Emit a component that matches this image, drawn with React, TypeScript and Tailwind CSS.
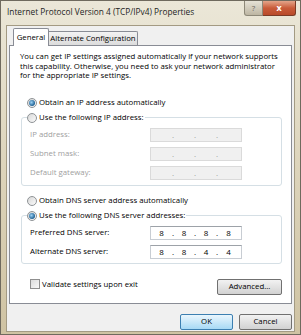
const ui = "font-['Open_Sans','Noto_Sans',sans-serif]";

function Radio({ checked }: { checked?: boolean }) {
  return (
    <span className="w-[10px] h-[10px] rounded-full border border-[#8f9396] bg-linear-to-br from-[#d8d8d8] to-[#fbfbfb] flex items-center justify-center shrink-0">
      {checked && <span className="w-[6px] h-[6px] rounded-full bg-[radial-gradient(circle_at_40%_40%,#9fd3f5,#1c5f92_70%)]" />}
    </span>
  );
}

function IpBox({ values, disabled }: { values: string[]; disabled?: boolean }) {
  const seg = ["w-[21px]", "w-[20px]", "w-[20px]", "w-[21px]"];
  return (
    <div
      className={
        "w-[92px] h-[14px] border flex items-center text-[8px] " +
        (disabled ? "bg-[#f0f0f0] border-[#dadada] text-[#9a9a9a]" : "bg-white border-[#c8cdd3] border-t-[#9da2a8] text-black")
      }
    >
      {values.map((v, i) => (
        <div key={i} className="flex items-center">
          <span className={seg[i] + " text-center"}>{v}</span>
          {i < 3 && <span className="w-[2px] text-center">.</span>}
        </div>
      ))}
    </div>
  );
}

function Row({ label, values, disabled }: { label: string; values: string[]; disabled?: boolean }) {
  return (
    <div className="flex items-center h-[14px]">
      <span className={"w-[128px] pl-[8px] " + (disabled ? "text-[#a0a0a0]" : "text-black")}>{label}</span>
      <IpBox values={values} disabled={disabled} />
    </div>
  );
}

function Button({ children, primary, w }: { children: string; primary?: boolean; w: string }) {
  return (
    <button
      className={
        w +
        " h-[16px] rounded-[2px] border text-[7.8px] leading-none flex items-center justify-center " +
        (primary
          ? "border-[#3c7fb1] bg-linear-to-b from-[#eaf6fd] to-[#a7d9f5]"
          : "border-[#707070] bg-linear-to-b from-[#f2f2f2] to-[#d2d2d2]")
      }
    >
      {children}
    </button>
  );
}

export default function App() {
  return (
    <div className={ui + " w-[301px] h-[335px] bg-linear-to-b from-[#ebe7d8] via-[#ddd4bb] to-[#cfc3a3] border border-[#6f6a5e] flex flex-col text-[7.8px] text-black"}>
      {/* title bar */}
      <div className="h-[24px] flex items-start shrink-0">
        <span className="pl-[6px] pt-[5px] text-[8.3px] text-[#1e1e1e] whitespace-nowrap">Internet Protocol Version 4 (TCP/IPv4) Properties</span>
        <div className="ml-auto mr-[4px] flex">
          <div className="w-[19px] h-[15px] rounded-bl-[3px] border border-t-0 border-[#8d8878] bg-linear-to-b from-[#e6e2d6] to-[#bdb6a3] flex items-center justify-center text-[8px] text-[#6a665a]">?</div>
          <div className="w-[33px] h-[15px] rounded-br-[3px] border border-t-0 border-l-0 border-[#7a3b26] bg-linear-to-b from-[#e3a58a] via-[#c95c3a] to-[#b84a2a] flex items-center justify-center text-[9px] font-bold text-white">x</div>
        </div>
      </div>

      {/* client area */}
      <div className="mx-[5px] flex-1 mb-[2px] bg-[#f0f0f0] border border-[#a39a83] flex flex-col px-[2px]">
        {/* tabs */}
        <div className="flex items-end h-[19px] pl-[4px] shrink-0">
          <div className="h-[18px] w-[36px] bg-white border border-b-0 border-[#898c95] rounded-t-[2px] flex items-center justify-center relative top-[1px] z-10 whitespace-nowrap">General</div>
          <div className="h-[14px] w-[89px] bg-linear-to-b from-[#f3f3f3] to-[#dcdcdc] border border-b-0 border-l-0 border-[#898c95] rounded-tr-[2px] flex items-center justify-center whitespace-nowrap">Alternate Configuration</div>
        </div>

        {/* panel */}
        <div className="h-[259px] bg-white border border-[#898c95] flex flex-col pl-[10px] pr-[9px]">
          <p className="mt-[6px] leading-[9.5px] whitespace-nowrap">
            You can get IP settings assigned automatically if your network supports
            <br />
            this capability. Otherwise, you need to ask your network administrator
            <br />
            for the appropriate IP settings.
          </p>

          <label className="mt-[16px] h-[12px] flex items-center gap-[2px] pl-[7px]">
            <Radio checked />
            <span>Obtain an IP address automatically</span>
          </label>

          <fieldset className="mt-[3px] ml-[1px] border border-[#d5dfe5] rounded-[3px] pb-[5px] flex flex-col gap-[5px]">
            <legend className="ml-[5px] h-[12px] flex items-center gap-[2px] pr-[1px]">
              <Radio />
              <span>Use the following IP address:</span>
            </legend>
            <div className="mt-[4px] flex flex-col gap-[5px]">
              <Row label="IP address:" values={["", "", "", ""]} disabled />
              <Row label="Subnet mask:" values={["", "", "", ""]} disabled />
              <Row label="Default gateway:" values={["", "", "", ""]} disabled />
            </div>
          </fieldset>

          <label className="mt-[9px] h-[12px] flex items-center gap-[2px] pl-[7px]">
            <Radio />
            <span>Obtain DNS server address automatically</span>
          </label>

          <fieldset className="mt-[3px] ml-[1px] border border-[#d5dfe5] rounded-[3px] pb-[4px]">
            <legend className="ml-[5px] h-[12px] flex items-center gap-[2px] pr-[1px]">
              <Radio checked />
              <span>Use the following DNS server addresses:</span>
            </legend>
            <div className="mt-[4px] flex flex-col gap-[5px]">
              <Row label="Preferred DNS server:" values={["8", "8", "8", "8"]} />
              <Row label="Alternate DNS server:" values={["8", "8", "4", "4"]} />
            </div>
          </fieldset>

          <div className="mt-[15px] flex items-start">
            <label className="ml-[10px] flex items-center gap-[2px]">
              <span className="w-[10px] h-[10px] border border-[#8f8f8f] bg-linear-to-br from-[#dcdcdc] to-[#f8f8f8]" />
              <span>Validate settings upon exit</span>
            </label>
            <div className="ml-auto">
              <Button w="w-[65px]">Advanced...</Button>
            </div>
          </div>
        </div>

        {/* dialog buttons */}
        <div className="mt-[10px] flex justify-end gap-[6px]">
          <Button primary w="w-[53px]">OK</Button>
          <Button w="w-[53px]">Cancel</Button>
        </div>
      </div>
    </div>
  );
}
